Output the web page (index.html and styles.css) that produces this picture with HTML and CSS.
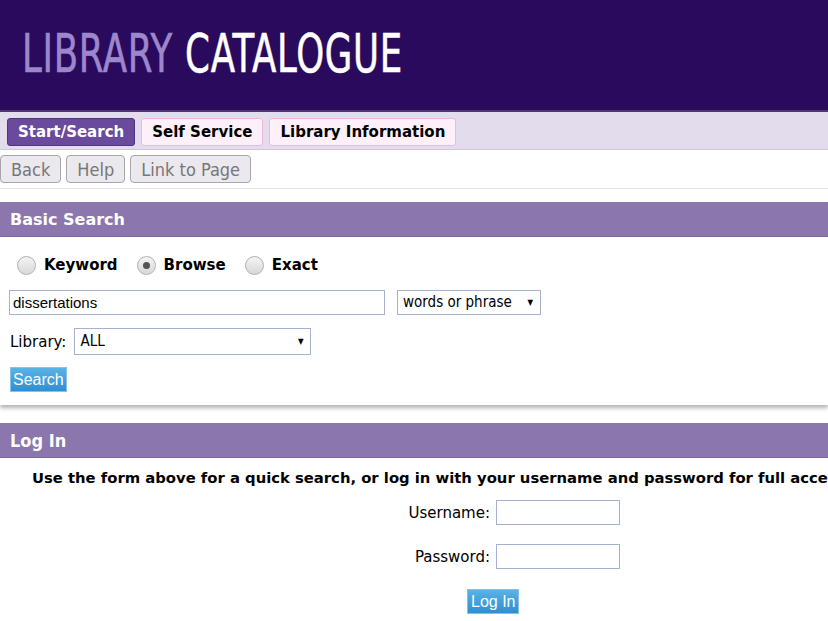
FILE: index.html
```html
<!DOCTYPE html>
<html>
<head>
<meta charset="utf-8">
<link rel="stylesheet" href="styles.css">
</head>
<body>
<header class="banner">
  <div class="logo"><span class="logo-a">LIBRARY</span> <span class="logo-b">CATALOGUE</span></div>
</header>
<nav class="tabs">
  <a class="tab tab-active">Start/Search</a>
  <a class="tab">Self Service</a>
  <a class="tab">Library Information</a>
</nav>
<div class="toolbar">
  <button class="tbtn">Back</button>
  <button class="tbtn">Help</button>
  <button class="tbtn">Link to Page</button>
</div>
<section class="panel search-panel">
  <h2 class="panel-head">Basic Search</h2>
  <div class="panel-body">
    <div class="radios">
      <label class="radio"><span class="rdot"></span>Keyword</label>
      <label class="radio"><span class="rdot rdot-on"></span>Browse</label>
      <label class="radio"><span class="rdot"></span>Exact</label>
    </div>
    <div class="row">
      <div class="textbox wide">dissertations</div>
      <div class="select sel-type">words or phrase<span class="arrow">▼</span></div>
    </div>
    <div class="row lib-row">
      <span class="lib-label">Library:</span>
      <div class="select sel-lib">ALL<span class="arrow">▼</span></div>
    </div>
    <div class="blue-btn">Search</div>
  </div>
</section>
<section class="panel login-panel">
  <h2 class="panel-head login-head">Log In</h2>
  <p class="login-msg">Use the form above for a quick search, or log in with your username and password for full access.</p>
  <div class="login-grid">
    <span class="lg-label">Username:</span><div class="textbox lg-input"></div>
    <span class="lg-label">Password:</span><div class="textbox lg-input"></div>
  </div>
  <div class="login-btn-wrap"><div class="blue-btn login-btn">Log In</div></div>
</section>
</body>
</html>
```
FILE: styles.css
```css
html, body { margin: 0; padding: 0; }
body {
  width: 828px;
  overflow: hidden;
  font-family: "DejaVu Sans", Verdana, sans-serif;
  background: #fff;
  color: #000;
}
.banner {
  height: 112px;
  background: #2a0a5c;
  border-bottom: 2px solid #4a3a6a;
  box-sizing: border-box;
  padding-left: 22px;
  padding-top: 26px;
}
.logo {
  font-family: "DejaVu Sans Condensed", "DejaVu Sans", sans-serif;
  font-size: 53px;
  line-height: 56px;
  white-space: nowrap;
  transform: scaleX(0.745);
  transform-origin: left center;
  letter-spacing: 1px;
  -webkit-text-stroke: 0.6px currentColor;
}
.logo-a { color: #9d87cc; }
.logo-b { color: #ffffff; }
.tabs {
  height: 38px;
  background: #e3dcec;
  border-bottom: 1px solid #cfc8d8;
  display: flex;
  gap: 6px;
  padding: 6px 0 0 7px;
  box-sizing: border-box;
}
.tab {
  font-family: "DejaVu Sans", Verdana, sans-serif;
  font-weight: bold;
  font-size: 15px;
  height: 28px;
  line-height: 26px;
  box-sizing: border-box;
  padding: 0 10px;
  border: 1px solid #f0b8dc;
  border-radius: 3px;
  background: #fdf0f8;
  color: #000;
}
.tab-active {
  background: #6a4a9c;
  border-color: #4e3580;
  color: #fff;
}
.toolbar {
  display: flex;
  gap: 5px;
  padding: 5px 0 0 0;
  height: 39px;
  box-sizing: border-box;
  border-bottom: 1px solid #e2e2e2;
}
.tbtn {
  font-family: "DejaVu Sans Condensed", "DejaVu Sans", sans-serif;
  font-size: 18px;
  color: #777;
  background: #ebe8ee;
  border: 1px solid #a8a4b0;
  border-radius: 4px;
  height: 28px;
  padding: 0 10px;
  margin: 0;
}
.panel {
  box-shadow: 0 3px 4px rgba(0,0,0,0.3);
}
.search-panel { margin-top: 13px; }
.panel-head {
  margin: 0;
  height: 35px;
  background: #8b76ae;
  border-bottom: 1px solid #7c68a0;
  box-sizing: border-box;
  color: #fff;
  font-size: 16px;
  font-family: "DejaVu Sans", Verdana, sans-serif;
  font-weight: bold;
  line-height: 35px;
  padding-left: 10px;
}
.login-head {
  font-family: "DejaVu Sans Condensed", "DejaVu Sans", sans-serif;
  font-size: 18px;
}
.panel-body {
  padding: 17px 0 13px 10px;
}
.radios {
  display: flex;
  gap: 19px;
  padding-left: 7px;
  height: 22px;
  align-items: center;
}
.radio {
  display: flex;
  align-items: center;
  gap: 8px;
  font-family: "DejaVu Sans", Verdana, sans-serif;
  font-weight: bold;
  font-size: 15px;
}
.rdot {
  width: 19px;
  height: 19px;
  border-radius: 50%;
  border: 1px solid #b0b0b0;
  background: linear-gradient(#f4f4f4, #d8d8d8);
  box-sizing: border-box;
  position: relative;
}
.rdot-on::after {
  content: "";
  position: absolute;
  left: 5px; top: 5px;
  width: 7px; height: 7px;
  border-radius: 50%;
  background: #555;
}
.row {
  display: flex;
  align-items: center;
  margin-top: 14px;
}
.textbox {
  height: 25px;
  border: 1px solid #a8b0d0;
  box-sizing: border-box;
  font-family: "Liberation Sans", Arial, sans-serif;
  font-size: 15px;
  line-height: 23px;
  padding-left: 3px;
  background: #fff;
}
.wide { width: 376px; margin-left: -1px; }
.select {
  height: 25px;
  border: 1px solid #a8b0d0;
  box-sizing: border-box;
  font-family: "DejaVu Sans Condensed", "DejaVu Sans", sans-serif;
  font-size: 15px;
  line-height: 23px;
  padding-left: 5px;
  position: relative;
  background: #fff;
}
.arrow {
  position: absolute;
  right: 7px;
  top: 0;
  font-size: 8px;
}
.sel-type { width: 144px; margin-left: 12px; }
.lib-row { margin-top: 13px; }
.lib-label {
  font-family: "DejaVu Sans", Verdana, sans-serif;
  font-size: 15px;
  margin-right: 8px;
}
.sel-lib { width: 237px; height: 27px; line-height: 25px; }
.blue-btn {
  display: inline-block;
  margin-top: 12px;
  height: 25px;
  box-sizing: border-box;
  padding: 0 2px;
  background: linear-gradient(#5ab2e6, #2e8fd2);
  border: 1px solid #88c0e8;
  color: #fff;
  font-family: "Liberation Sans", Arial, sans-serif;
  font-size: 16px;
  line-height: 23px;
}
.login-panel { margin-top: 18px; box-shadow: none; }
.login-msg {
  margin: 10px 0 0 32px;
  white-space: nowrap;
  font-family: "DejaVu Sans", Verdana, sans-serif;
  font-weight: bold;
  font-size: 14.8px;
  line-height: 20px;
}
.login-grid {
  display: grid;
  grid-template-columns: 490px 124px;
  column-gap: 6px;
  row-gap: 19px;
  margin-top: 12px;
  align-items: center;
}
.lg-label {
  text-align: right;
  font-family: "DejaVu Sans", Verdana, sans-serif;
  font-size: 15px;
}
.lg-input { width: 124px; }
.login-btn-wrap { padding-left: 467px; }
.login-btn { margin-top: 20px; padding: 0 3px; }
```
